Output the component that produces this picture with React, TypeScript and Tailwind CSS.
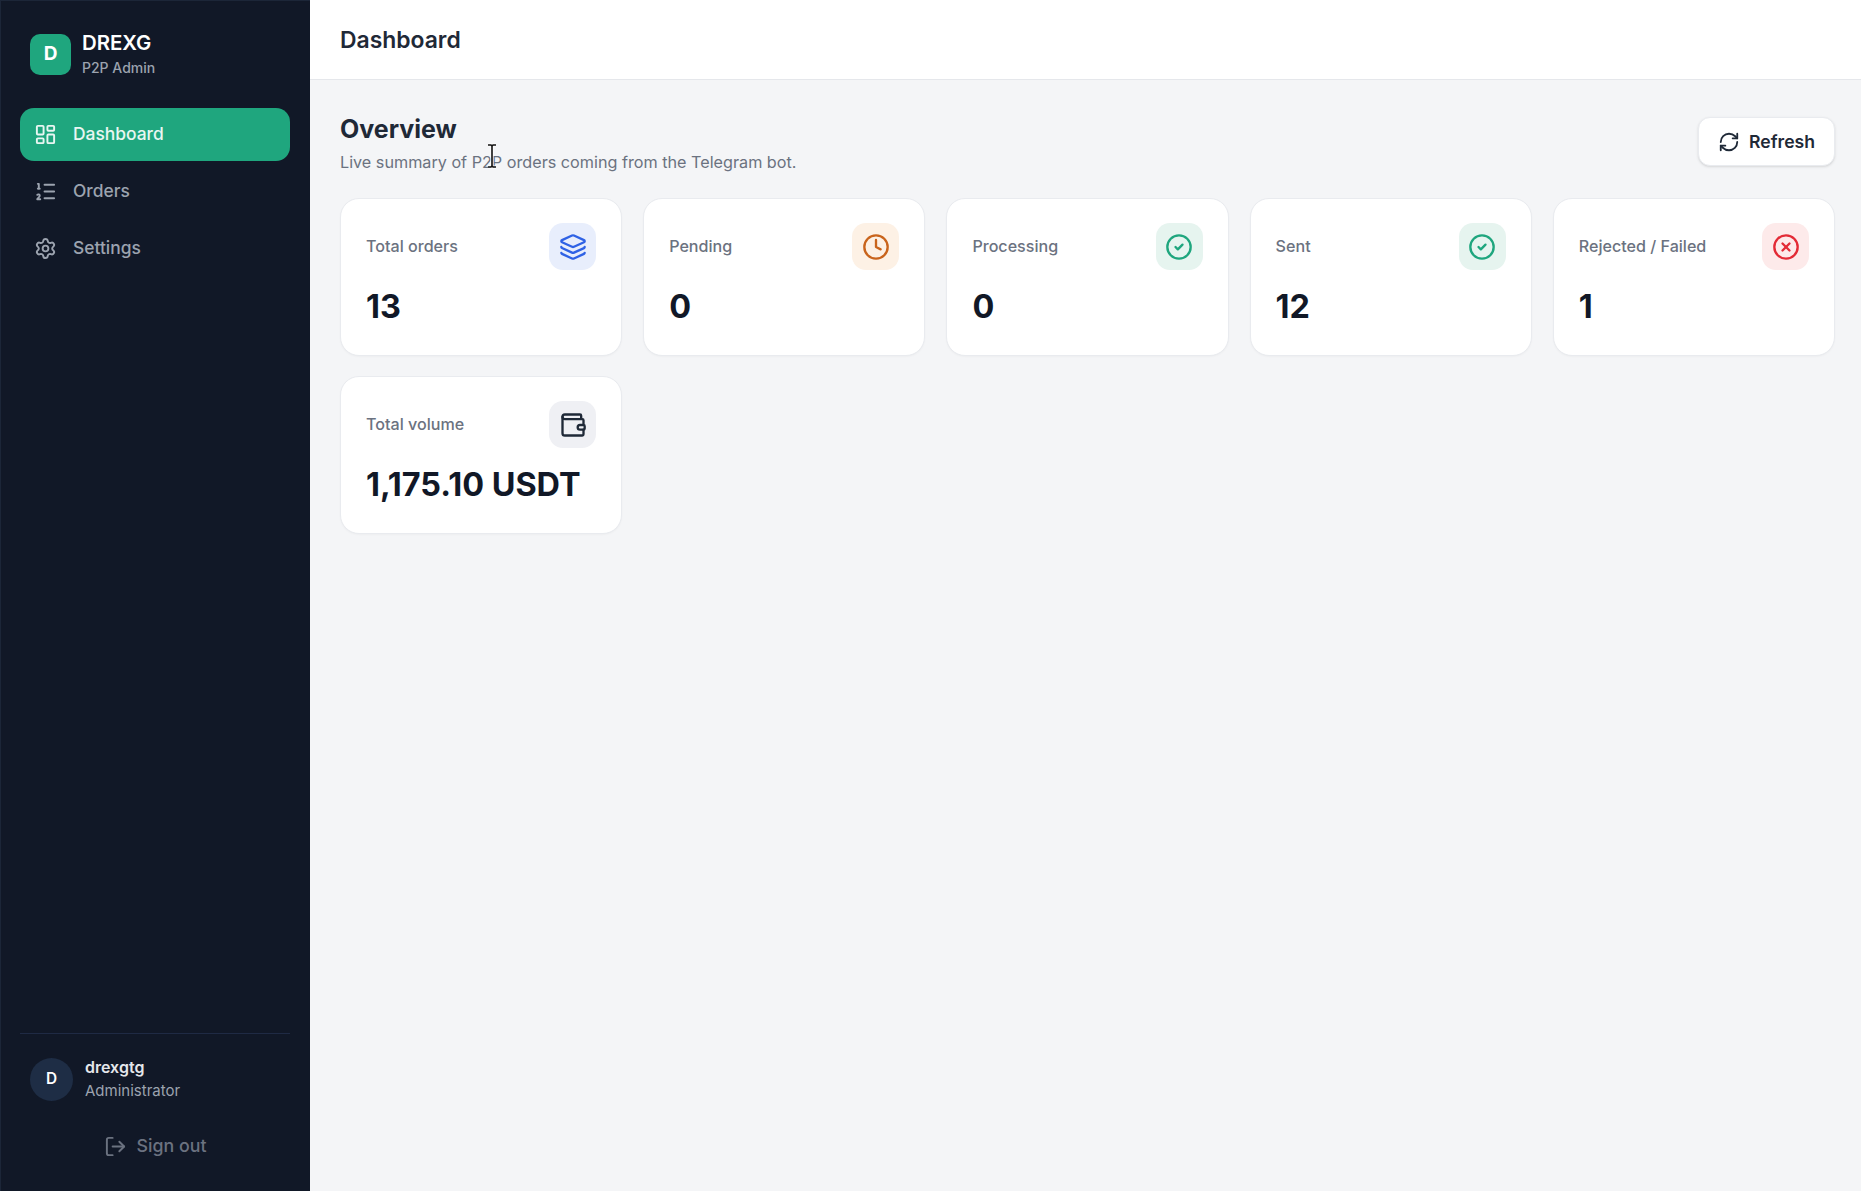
import { CircleCheck, Clock, Layers, LayoutDashboard, ListOrdered, LogOut, RefreshCw, Settings, CircleX, Wallet } from "lucide-react";
import type { ReactNode } from "react";

const stats: { label: string; value: string; box: string; icon: ReactNode }[] = [
  { label: "Total orders", value: "13", box: "bg-[#e8eefc]", icon: <Layers className="w-[28px] h-[28px] text-[#2f62e5]" /> },
  { label: "Pending", value: "0", box: "bg-[#fdf1e5]", icon: <Clock className="w-[28px] h-[28px] text-[#c9641c]" /> },
  { label: "Processing", value: "0", box: "bg-[#e6f4ef]", icon: <CircleCheck className="w-[28px] h-[28px] text-[#1fa67e]" /> },
  { label: "Sent", value: "12", box: "bg-[#e6f4ef]", icon: <CircleCheck className="w-[28px] h-[28px] text-[#1fa67e]" /> },
  { label: "Rejected / Failed", value: "1", box: "bg-[#fdeaea]", icon: <CircleX className="w-[28px] h-[28px] text-[#e32b36]" /> },
  { label: "Total volume", value: "1,175.10 USDT", box: "bg-[#eff0f4]", icon: <Wallet className="w-[28px] h-[28px] text-[#1f2937]" /> },
];

const nav = [
  { label: "Dashboard", icon: LayoutDashboard, active: true },
  { label: "Orders", icon: ListOrdered, active: false },
  { label: "Settings", icon: Settings, active: false },
];

export default function App() {
  return (
    <div className="flex h-[1191px] w-[1861px] overflow-hidden bg-[#f4f5f7] font-['Inter',sans-serif]">
      {/* sidebar */}
      <aside className="flex w-[310px] shrink-0 flex-col border-t border-l border-[#1c2638] bg-[#111827] pr-[20px] pl-[19px]">
        <div className="flex items-center gap-[11px] px-[10px] pt-[30px]">
          <div className="flex h-[41px] w-[41px] items-center justify-center rounded-[10px] bg-[#1fa67e] text-[19px] font-bold text-white">D</div>
          <div>
            <div className="text-[20.4px] leading-[24px] font-semibold text-white">DREXG</div>
            <div className="mt-[4px] text-[14px] leading-[18px] font-medium text-[#9ca3af]">P2P Admin</div>
          </div>
        </div>

        <nav className="mt-[31px] flex flex-col gap-[4px]">
          {nav.map((item) => (
            <a
              key={item.label}
              className={
                item.active
                  ? "flex h-[53px] items-center gap-[16px] rounded-[14px] bg-[#1fa67e] px-[14px] text-[17.4px] font-medium text-white/90"
                  : "flex h-[53px] items-center gap-[16px] rounded-[14px] px-[14px] text-[17.4px] font-medium text-[#9ca3af]"
              }
            >
              <item.icon className="h-[23px] w-[23px]" />
              {item.label}
            </a>
          ))}
        </nav>

        <div className="mt-auto border-t border-[#1f2a44] pt-[22px] pb-[22px]">
          <div className="flex items-center gap-[12px] px-[10px]">
            <div className="flex h-[43px] w-[43px] items-center justify-center rounded-full bg-[#1e2d45] text-[15.4px] font-semibold text-white">D</div>
            <div>
              <div className="text-[16px] leading-[23px] font-semibold text-[#e5e7eb]">drexgtg</div>
              <div className="text-[15px] leading-[23px] text-[#9ca3af]">Administrator</div>
            </div>
          </div>
          <button className="mt-[21px] flex h-[46px] w-full items-center justify-center gap-[10px] text-[17.8px] font-medium text-[#6b7280]">
            <LogOut className="h-[23px] w-[23px]" />
            Sign out
          </button>
        </div>
      </aside>

      {/* main */}
      <main className="flex min-w-0 flex-1 flex-col">
        <header className="flex h-[80px] items-center border-b border-[#e5e7eb] bg-white pt-[1px] pl-[30px]">
          <h1 className="text-[22.9px] font-semibold text-[#1f2937]">Dashboard</h1>
        </header>

        <div className="pt-[32px] pr-[26px] pl-[30px]">
          <div className="flex items-center justify-between">
            <div>
              <h2 className="text-[25px] leading-[34px] font-bold text-[#1f2937]">Overview</h2>
              <p className="mt-[5px] text-[16.2px] leading-[22px] text-[#6b7280]">Live summary of P2P orders coming from the Telegram bot.</p>
            </div>
            <button className="mb-[2px] flex h-[49px] items-center gap-[9px] rounded-[12px] border border-[#e9ebef] bg-white px-[19px] pt-[1px] text-[17.6px] font-semibold text-[#1f2937] shadow-sm">
              <RefreshCw className="h-[22px] w-[22px]" />
              Refresh
            </button>
          </div>

          <div className="mt-[25px] grid grid-cols-5 gap-x-[21px] gap-y-[20px]">
            {stats.map((s) => (
              <div key={s.label} className="rounded-[19px] border border-[#e9ebef] bg-white pt-[24px] pr-[25px] pb-[28px] pl-[25px] shadow-[0_1px_2px_rgba(0,0,0,0.03)]">
                <div className="flex items-center justify-between">
                  <span className="text-[16.1px] font-medium text-[#6b7280]">{s.label}</span>
                  <div className={`flex h-[47px] w-[47px] items-center justify-center rounded-[14px] ${s.box}`}>{s.icon}</div>
                </div>
                <div className="mt-[17px] text-[32.4px] leading-[40px] font-bold text-[#111827]">{s.value}</div>
              </div>
            ))}
          </div>
        </div>
      </main>

      {/* text cursor caught in the screenshot */}
      <svg className="absolute top-[143px] left-[485px]" width="14" height="26" viewBox="0 0 14 26" fill="none">
        <path d="M3 2h3l1 1 1-1h3M7 3v20M3 24h3l1-1 1 1h3" stroke="#fff" strokeWidth="3.500" opacity="0.7" />
        <path d="M3 2h3l1 1 1-1h3M7 3v20M3 24h3l1-1 1 1h3" stroke="#111" strokeWidth="1.600" />
      </svg>
    </div>
  );
}
